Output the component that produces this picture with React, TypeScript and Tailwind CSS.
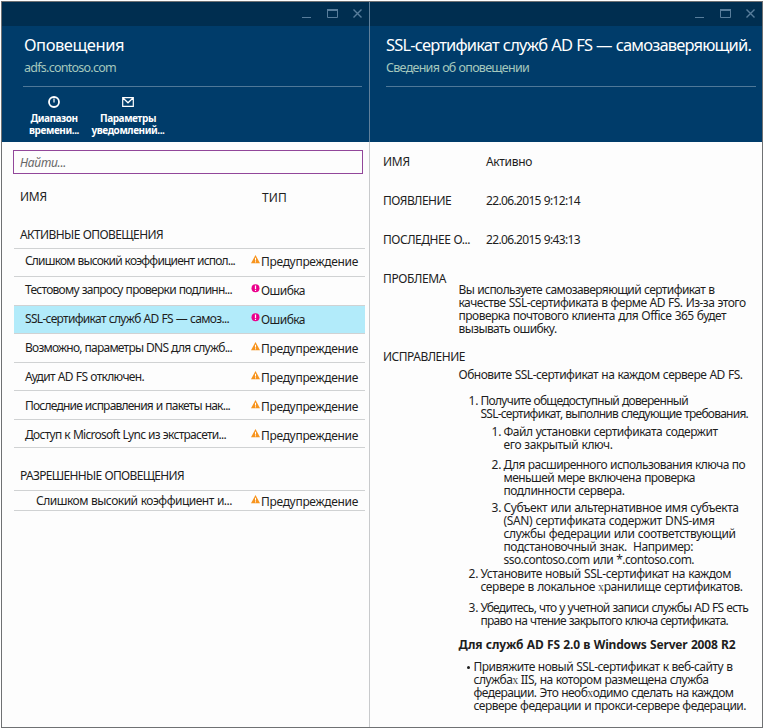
import { useLayoutEffect, useRef, useState } from "react";
import type { ReactNode } from "react";

/** A single line whose tracking is adjusted so that it spans `w` pixels. */
function Line({ w, className = "", children }: { w: number; className?: string; children: ReactNode }) {
  const ref = useRef<HTMLSpanElement>(null);
  const [tracking, setTracking] = useState(0);
  useLayoutEffect(() => {
    const el = ref.current;
    if (!el) return;
    const count = (el.textContent || "").length;
    setTracking((w - el.getBoundingClientRect().width) / count);
  }, []);
  return (
    <div className={`whitespace-pre ${className}`}>
      <span ref={ref} style={{ letterSpacing: `${tracking}px` }}>{children}</span>
    </div>
  );
}

const Kha = () => <span className="font-['Liberation_Serif',serif] leading-none text-[#555]">х</span>;

function WindowButtons() {
  return (
    <svg width="64" height="12" viewBox="0 0 64 12" fill="none" stroke="#587d9b">
      <path d="M2 10.5h9" />
      <path d="M27 3.5h11M27 2.5h11M27.5 2v8.5h10V2" />
      <path d="M53.5 2.5l8 8M61.5 2.5l-8 8" strokeWidth="1.4" />
    </svg>
  );
}

function Warning() {
  return (
    <svg width="9" height="9" viewBox="0 0 9 9">
      <path d="M4.5 0L9 8.2H0z" fill="#f7941e" />
      <path d="M4.5 2.8v2.8M4.5 6.3v1.1" stroke="#fff" strokeWidth="1" />
    </svg>
  );
}

function ErrorMark() {
  return (
    <svg width="9" height="9" viewBox="0 0 9 9">
      <circle cx="4.5" cy="4.2" r="4" fill="#ec008c" />
      <path d="M4.5 1.6v3.3M4.5 5.7v1.2" stroke="#fff" strokeWidth="1.2" />
    </svg>
  );
}

type Alert = { name: string; w: number; error?: boolean; height: string; selected?: boolean };

const alerts: Alert[] = [
  { name: "Слишком высокий коэффициент испол...", w: 210, height: "h-[28px] pt-[5px]" },
  { name: "Тестовому запросу проверки подлинн...", w: 207, error: true, height: "h-[29px] pt-[6px]" },
  { name: "SSL-сертификат служб AD FS — самоз...", w: 204, error: true, selected: true, height: "h-[28px] pt-[6px]" },
  { name: "Возможно, параметры DNS для служб...", w: 207, height: "h-[29px] pt-[7px]" },
  { name: "Аудит AD FS отключен.", w: 119, height: "h-[28px] pt-[7px]" },
  { name: "Последние исправления и пакеты нак...", w: 205, height: "h-[29px] pt-[8px]" },
  { name: "Доступ к Microsoft Lync из экстрасети...", w: 201, height: "h-[28px] pt-[8px]" },
];

function Kind({ error = false }: { error?: boolean }) {
  return (
    <div className="flex">
      <div className="w-[10px] pt-px">{error ? <ErrorMark /> : <Warning />}</div>
      {error ? <Line w={44} className="pt-px">Ошибка</Line> : <Line w={97} className="pt-px">Предупреждение</Line>}
    </div>
  );
}

function Header({ title, tw, sub, sw, className, left, rule, children }: { title: string; tw: number; sub: string; sw: number; className: string; left: string; rule: string; children?: ReactNode }) {
  return (
    <header className={`h-[140px] bg-[#003c6a] text-white ${className}`}>
      <div className="flex h-[24px] justify-end bg-[#002e50] pt-[5px] pr-[5px]">
        <WindowButtons />
      </div>
      <div className={left}>
        <Line w={tw} className="pt-[7px] text-[16.5px] leading-[24px]">{title}</Line>
        <Line w={sw} className="pt-[3px] text-[12.5px] leading-[16px] text-[#a5c8bd]">{sub}</Line>
      </div>
      <div className={`mt-[10px] h-px bg-[#4f7898] ${rule}`} />
      {children}
    </header>
  );
}

function Numbered({ n, className, children }: { n: string; className: string; children: ReactNode }) {
  return (
    <div className={`flex ${className}`}>
      <div className="w-[12px]">{n}</div>
      <div>{children}</div>
    </div>
  );
}

export default function App() {
  return (
    <div className="h-[728px] w-[763px] overflow-hidden bg-white pt-px pl-px font-['Noto_Sans',sans-serif] text-[12px] leading-[13px] [word-spacing:0.5px] text-[#1e1e1e]">
      <div className="flex h-[727px] w-[762px] border border-[#6f7173]">
        <section className="w-[368px] border-r border-[#c8cacc] bg-[#fdfdfd]">
          <Header title="Оповещения" tw={100} sub="adfs.contoso.com" sw={92} className="-mr-px border-r border-[#5f809b]" left="pl-[22px]" rule="ml-[21px] mr-[7px]">
            <div className="flex pt-[9px] text-center text-[10px] leading-[12px] font-bold">
              <div className="ml-[26px] flex w-[52px] flex-col items-center">
                <svg width="12" height="12" viewBox="0 0 12 12" fill="none" stroke="#fff">
                  <circle cx="6" cy="6" r="5" strokeWidth="1.8" />
                  <path d="M6 2.5v4" strokeWidth="1.2" />
                </svg>
                <Line w={47} className="pt-[4px]">Диапазон</Line>
                <Line w={50}>времени...</Line>
              </div>
              <div className="ml-[11px] flex w-[74px] flex-col items-center">
                <svg width="12" height="12" viewBox="0 0 12 12" fill="none" stroke="#fff">
                  <path d="M.7 1.7h10.6v8.6H.7zM1 2l5 4.8L11 2" strokeWidth="1.2" />
                </svg>
                <Line w={56} className="pt-[4px]">Параметры</Line>
                <Line w={73}>уведомлений...</Line>
              </div>
            </div>
          </Header>
          <div className="mt-[8px] ml-[11px] h-[24px] w-[350px] border border-[#92479a] pt-[5px] pl-[6px] text-[#666] italic">
            <Line w={46}>Найти...</Line>
          </div>
          <div className="flex pt-[16px]">
            <Line w={27} className="w-[242px] pl-[18px]">ИМЯ</Line>
            <Line w={25} className="pt-px pl-[18px]">ТИП</Line>
          </div>
          <Line w={143} className="pt-[24px] pl-[18px]">АКТИВНЫЕ ОПОВЕЩЕНИЯ</Line>
          <div className="mt-[7px] ml-[12px] h-px w-[351px] bg-[#d0d2d3]" />
          <div className="ml-[12px] w-[351px]">
            {alerts.map((a) => (
              <div key={a.name} className={`flex border-b border-[#d0d2d3] ${a.height} ${a.selected ? "bg-[#b2ebfa]" : ""}`}>
                <Line w={a.w} className="w-[237px] pl-[11px]">{a.name}</Line>
                <Kind error={a.error} />
              </div>
            ))}
          </div>
          <Line w={164} className="pt-[21px] pl-[18px]">РАЗРЕШЕННЫЕ ОПОВЕЩЕНИЯ</Line>
          <div className="mt-[8px] ml-[12px] flex h-[21px] w-[351px] border-y border-[#d0d2d3] pt-[3px]">
            <Line w={196} className="w-[237px] pl-[22px]">Слишком высокий коэффициент и...</Line>
            <Kind />
          </div>
        </section>

        <section className="w-[392px] bg-[#fdfdfd]">
          <Header title="SSL-сертификат служб AD FS — самозаверяющий." tw={365} sub="Сведения об оповещении" sw={143} className="" left="pl-[16px]" rule="ml-[16px] mr-[6px]" />
          <div className="pt-[13px] pl-[13px]">
            <div className="flex h-[39px]">
              <Line w={27} className="w-[103px]">ИМЯ</Line>
              <Line w={46}>Активно</Line>
            </div>
            <div className="flex h-[39px]">
              <Line w={68} className="w-[103px]">ПОЯВЛЕНИЕ</Line>
              <Line w={94}>22.06.2015 9:12:14</Line>
            </div>
            <div className="flex h-[39px]">
              <Line w={87} className="w-[103px]">ПОСЛЕДНЕЕ О...</Line>
              <Line w={94}>22.06.2015 9:43:13</Line>
            </div>
            <Line w={63} className="h-[11px]">ПРОБЛЕМА</Line>
            <div className="pl-[75.5px]">
              <Line w={256}>Вы используете самозаверяющий сертификат в</Line>
              <Line w={287}>качестве SSL-сертификата в ферме AD FS. Из-за этого</Line>
              <Line w={267.5}>проверка почтового клиента для Office 365 будет</Line>
              <Line w={98}>вызывать ошибку.</Line>
            </div>
            <Line w={82} className="mt-[15px] h-[18px]">ИСПРАВЛЕНИЕ</Line>
            <div className="pl-[75.5px]">
              <Line w={284}>Обновите SSL-сертификат на каждом сервере AD FS.</Line>
              <Numbered n="1." className="mt-[13px] ml-[10px]">
                <Line w={207.5}>Получите общедоступный доверенный</Line>
                <Line w={267.5}>SSL-сертификат, выполнив следующие требования.</Line>
              </Numbered>
              <Numbered n="1." className="mt-[5px] ml-[33px]">
                <Line w={214}>Файл установки сертификата содержит</Line>
                <Line w={109}>его закрытый ключ.</Line>
              </Numbered>
              <Numbered n="2." className="mt-[7px] ml-[33px]">
                <Line w={241.5}>Для расширенного использования ключа по</Line>
                <Line w={191.5}>меньшей мере включена проверка</Line>
                <Line w={121}>подлинности сервера.</Line>
              </Numbered>
              <Numbered n="3." className="mt-[4px] ml-[33px]">
                <Line w={235}>Субъект или альтернативное имя субъекта</Line>
                <Line w={211}>(SAN) сертификата содержит DNS-имя</Line>
                <Line w={232}>службы федерации или соответствующий</Line>
                <Line w={189.5}>подстановочный знак.  Например:</Line>
                <Line w={190.5}>sso.contoso.com или *.contoso.com.</Line>
              </Numbered>
              <Numbered n="2." className="mt-px ml-[10px]">
                <Line w={250.5}>Установите новый SSL-сертификат на каждом</Line>
                <Line w={262} className="h-[13px]">сервере в локальное <Kha />ранилище сертификатов.</Line>
              </Numbered>
              <Numbered n="3." className="mt-[8px] ml-[10px]">
                <Line w={267.5}>Убедитесь, что у учетной записи службы AD FS есть</Line>
                <Line w={247.5}>право на чтение закрытого ключа сертификата.</Line>
              </Numbered>
              <Line w={277} className="mt-[11px] font-bold">Для служб AD FS 2.0 в Windows Server 2008 R2</Line>
              <div className="mt-[9px] flex">
                <div className="w-[15px] pt-[6px] pl-[8px]">
                  <div className="size-[3px] rounded-full bg-[#1e1e1e]" />
                </div>
                <div>
                  <Line w={259}>Привяжите новый SSL-сертификат к веб-сайту в</Line>
                  <Line w={235} className="h-[13px]">служба<Kha /> IIS, на котором размещена служба</Line>
                  <Line w={260} className="h-[13px]">федерации. Это необ<Kha />одимо сделать на каждом</Line>
                  <Line w={272.5}>сервере федерации и прокси-сервере федерации.</Line>
                </div>
              </div>
            </div>
          </div>
        </section>
      </div>
    </div>
  );
}
